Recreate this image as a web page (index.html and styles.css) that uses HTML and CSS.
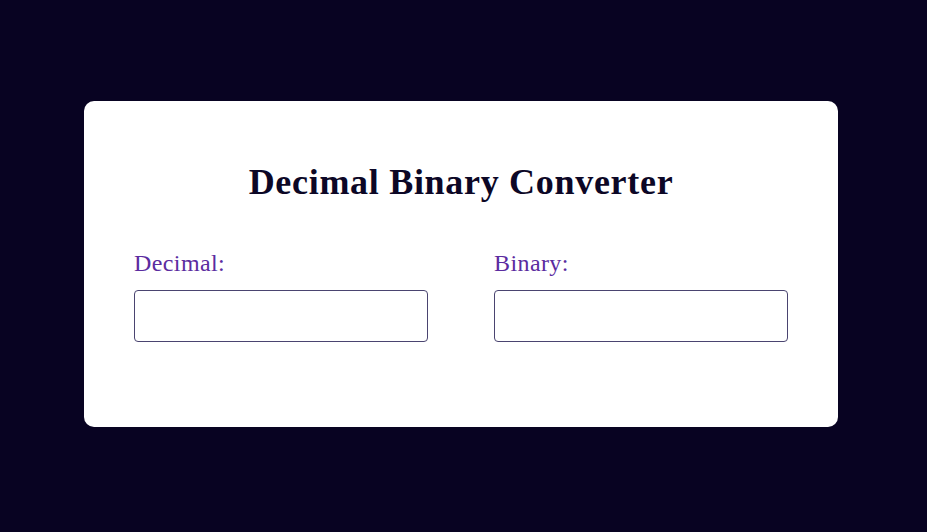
FILE: index.html
```html
<!DOCTYPE html>
<html lang="en">
<head>
<meta charset="utf-8">
<title>Decimal Binary Converter</title>
<link rel="stylesheet" href="styles.css">
</head>
<body>
<main class="card">
  <h1 class="title">Decimal Binary Converter</h1>
  <div class="fields">
    <div class="field">
      <label class="label" for="dec">Decimal:</label>
      <input class="input" id="dec" type="text">
    </div>
    <div class="field">
      <label class="label" for="bin">Binary:</label>
      <input class="input" id="bin" type="text">
    </div>
  </div>
</main>
</body>
</html>
```
FILE: styles.css
```css
html, body {
  margin: 0;
  height: 100%;
}
body {
  background: #080322;
  font-family: "Liberation Serif", "Times New Roman", serif;
  display: flex;
  align-items: flex-start;
  padding: 101px 0 0 84px;
  box-sizing: border-box;
}
.card {
  width: 754px;
  box-sizing: border-box;
  background: #ffffff;
  border-radius: 10px;
  padding: 61px 50px 85px;
}
.title {
  margin: 0;
  text-align: center;
  font-size: 36px;
  line-height: 40px;
  font-weight: bold;
  letter-spacing: 0.7px;
  color: #0c0726;
}
.fields {
  display: flex;
  gap: 66px;
  margin-top: 47px;
}
.field {
  flex: 1;
  display: flex;
  flex-direction: column;
  gap: 13px;
}
.label {
  font-size: 24px;
  line-height: 28px;
  letter-spacing: 0.4px;
  color: #5b2ca0;
}
.input {
  height: 52px;
  box-sizing: border-box;
  border: 1px solid #4a4470;
  border-radius: 4px;
  background: #fff;
  padding: 0 10px;
  font-family: inherit;
  font-size: 20px;
  outline: none;
}
```
